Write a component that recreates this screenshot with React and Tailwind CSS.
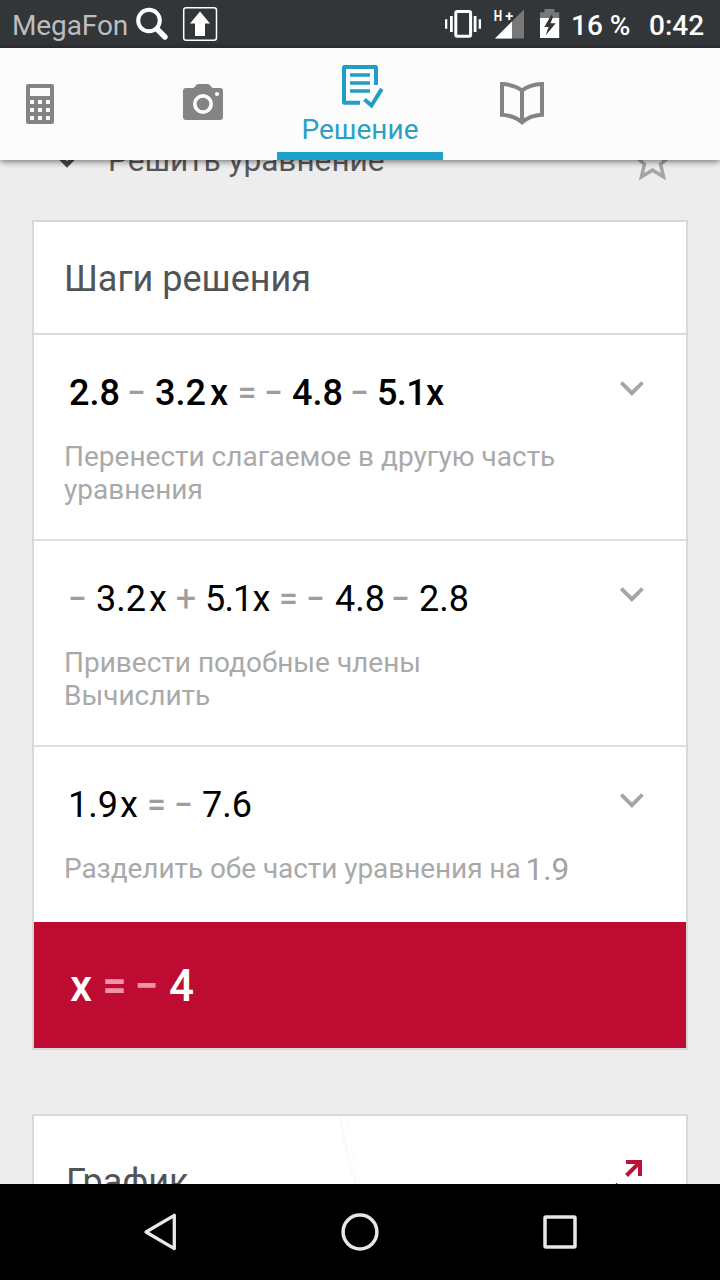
import React from "react";

const OP = "flex justify-center text-[33px] text-[#9e9e9e] font-medium";
const PLUS = "flex justify-center text-[36px] text-[#9e9e9e]";
const RESULT_OP = "flex justify-center text-[42px] text-[#ee93a8] font-bold";

const steps = [
  {
    weight: "font-medium",
    tokens: [
      ["2.8", "ml-[5px] w-[50px]"],
      ["−", "ml-[9px] w-[17px]", OP],
      ["3.2", "ml-[10px] w-[50px]"],
      ["x", "ml-[5px] w-[19px]"],
      ["=", "ml-[9px] w-[18px]", OP],
      ["−", "ml-[9px] w-[17px]", OP],
      ["4.8", "ml-[10px] w-[52px]"],
      ["−", "ml-[7px] w-[17px]", OP],
      ["5.1x", "ml-[9px] w-[68px] tracking-[-0.6px]"],
    ],
    notes: ["Перенести слагаемое в другую часть", "уравнения"],
  },
  {
    weight: "font-normal",
    tokens: [
      ["−", "ml-[5px] w-[17px]", OP],
      ["3.2", "ml-[10px] w-[50px]"],
      ["x", "ml-[3px] w-[18px]"],
      ["+", "ml-[10px] w-[18px]", PLUS],
      ["5.1x", "ml-[10px] w-[66px] tracking-[-0.8px]"],
      ["=", "ml-[9px] w-[17px]", OP],
      ["−", "ml-[10px] w-[17px]", OP],
      ["4.8", "ml-[11px] w-[50px]"],
      ["−", "ml-[7px] w-[17px]", OP],
      ["2.8", "ml-[10px] w-[50px]"],
    ],
    notes: ["Привести подобные члены", "Вычислить"],
  },
  {
    weight: "font-normal",
    tokens: [
      ["1.9", "ml-[4px] w-[50px]"],
      ["x", "ml-[2px] w-[18px]"],
      ["=", "ml-[10px] w-[17px]", OP],
      ["−", "ml-[10px] w-[17px]", OP],
      ["7.6", "ml-[10px] w-[50px]"],
    ],
    notes: ["Разделить обе части уравнения на"],
    value: "1.9",
  },
];

function Equation({ tokens, className }) {
  return (
    <div className={`flex whitespace-nowrap ${className}`}>
      {tokens.map(([text, box, style = "block"], i) => (
        <span key={i} className={`shrink-0 ${box} ${style}`}>
          {text}
        </span>
      ))}
    </div>
  );
}

function StatusBar() {
  return (
    <div className="flex h-12 shrink-0 items-center bg-[#333639] pt-[3px] text-[28px] leading-[42px] text-white">
      <span className="ml-3 w-[118px] tracking-[-0.1px] text-[#bdbdbd]">MegaFon</span>
      <svg className="-mt-[3px] ml-[4px]" width="36" height="48" viewBox="134 0 36 48" fill="none" stroke="#fff">
        <circle cx="149" cy="20.5" r="10.8" strokeWidth="4" />
        <path d="M157 29l8 8" strokeWidth="5.4" strokeLinecap="round" />
      </svg>
      <svg className="-mt-[3px] ml-[12px]" width="36" height="48" viewBox="182 0 36 48">
        <rect x="183.7" y="7.7" width="32.8" height="32.6" rx="2.5" fill="none" stroke="#fff" strokeWidth="1.5" />
        <path d="M200 11.5L210 23.5H205V36H195V23.5H190Z" fill="#fff" />
      </svg>
      <svg className="-mt-[3px] ml-[226px]" width="38" height="48" viewBox="444 0 38 48" fill="#fff">
        <rect x="455.8" y="11.5" width="14.8" height="24.8" rx="1.5" fill="none" stroke="#fff" strokeWidth="3" />
        <path d="M450 16h2.8v16H450zM445 19.3h2.3v9.4H445zM473.7 16h2.8v16h-2.8zM478.7 19.3h2.3v9.4h-2.3z" />
      </svg>
      <svg className="-mt-[3px] ml-[11px]" width="32" height="48" viewBox="493 0 32 48">
        <path d="M495 38.5L524 9.5V38.5Z" fill="#76787a" />
        <path d="M495 38.5L512 21.5V38.5Z" fill="#fff" />
        <text fill="#fff" y="20.6" fontFamily="Roboto, sans-serif" fontSize="14.5" fontWeight="700">
          <tspan x="493.700" textLength="8.400" lengthAdjust="spacingAndGlyphs">H</tspan>
          <tspan x="505.300">+</tspan>
        </text>
      </svg>
      <svg className="-mt-[3px] ml-[14px]" width="22" height="48" viewBox="539 0 22 48">
        <path d="M544.5 9h10v3.2h4.7V19H540v-6.8h4.5z" fill="#76787a" />
        <path d="M540 18h19.2v20H540z" fill="#fff" />
        <path d="M551.5 14.5L544.3 27H548.6L545.6 35.5L555.7 23.2H550.5L553 17Z" fill="#333639" />
      </svg>
      <span className="ml-[10px] w-[62px] whitespace-nowrap font-medium">16 %</span>
      <span className="ml-[16px] whitespace-nowrap font-medium">0:42</span>
    </div>
  );
}

function Tabs() {
  return (
    <div className="z-10 flex h-28 shrink-0 bg-[#fcfcfc] shadow-[0_1px_7px_rgba(0,0,0,0.6)]">
      <div className="flex w-[129px] items-center pl-[26px]">
        <svg width="28" height="40" viewBox="0 0 28 40">
          <path
            fill="#848484"
            fillRule="evenodd"
            d="M2 0h24a2 2 0 012 2v36a2 2 0 01-2 2H2a2 2 0 01-2-2V2a2 2 0 012-2zM4 4v8h20V4zM4 16v4h4v-4zM12 16v4h4v-4zM20 16v4h4v-4zM4 24v4h4v-4zM12 24v4h4v-4zM20 24v4h4v-4zM4 32v4h4v-4zM12 32v4h4v-4zM20 32v4h4v-4z"
          />
        </svg>
      </div>
      <div className="flex w-[148px] items-center justify-center">
        <svg width="40" height="36" viewBox="0 0 40 36" className="-mt-1">
          <path d="M3 4h7.5l3-3.2Q14.300 0 15.300 0h9.400q1 0 1.800.8l3 3.200H37q3 0 3 3v26q0 3-3 3H3q-3 0-3-3V7q0-3 3-3z" fill="#848484" />
          <circle cx="20" cy="20" r="8.200" fill="none" stroke="#fcfcfc" strokeWidth="3.700" />
          <circle cx="34" cy="10" r="2.100" fill="#fcfcfc" />
        </svg>
      </div>
      <div className="flex w-[166px] flex-col items-center border-b-8 border-[#1ba1cb] pt-4">
        <svg width="42" height="46" viewBox="341 64 42 46" fill="none" stroke="#249dc4" strokeWidth="4" className="ml-[4px]">
          <path d="M376 85V67.500Q376 67 375.500 67H344.500Q344 67 344 67.500V102.300Q344 102.800 344.500 102.800H360" />
          <path d="M350 75h20M350 83h20M350 91h20" strokeWidth="3.600" />
          <path d="M364.500 99.500L371.500 105.500L381.800 88.800" />
        </svg>
        <span className="pt-px text-[28px] leading-[38px] text-[#2c9fc4]">Решение</span>
      </div>
      <div className="flex w-[158px] items-center justify-center">
        <svg width="46" height="46" viewBox="499 80 46 46" fill="none" stroke="#848484" strokeWidth="4" className="-mt-[2px]">
          <path d="M522 90.500Q514 84.500 502 84.100V114.800Q514 115.500 522 122.300Q530 115.500 542 114.800V84.100Q530 84.500 522 90.500V122" />
        </svg>
      </div>
    </div>
  );
}

function NavBar() {
  return (
    <div className="z-10 flex h-24 shrink-0 items-center justify-center gap-[160px] bg-black">
      <svg width="40" height="40" viewBox="140 1212 40 40" fill="none" stroke="#e8e8e8" strokeWidth="3.300" strokeLinejoin="round">
        <path d="M146 1232L174.300 1215.300V1248.700Z" />
      </svg>
      <svg width="40" height="40" viewBox="340 1212 40 40" fill="none" stroke="#e8e8e8" strokeWidth="3.500">
        <circle cx="360" cy="1232" r="16.900" />
      </svg>
      <svg width="40" height="40" viewBox="540 1212 40 40" fill="none" stroke="#e8e8e8" strokeWidth="3.500">
        <rect x="545" y="1217" width="30" height="30" rx="1" />
      </svg>
    </div>
  );
}

export default function App() {
  return (
    <div className="flex h-[1280px] w-[720px] flex-col overflow-hidden bg-[#ededed] font-['Roboto',sans-serif]">
      <StatusBar />
      <Tabs />
      <div className="flex-1 overflow-hidden px-8">
        <div className="-mt-[60px] flex h-[120px] items-center">
          <svg width="24" height="16" viewBox="0 0 24 16" className="ml-[23px]" fill="none" stroke="#45484b" strokeWidth="4.500">
            <path d="M2 2.500L12 12.500L22 2.500" />
          </svg>
          <span className="ml-[29px] pt-px text-[31.6px] leading-[40px] whitespace-nowrap text-[#55585b]">Решить уравнение</span>
          <svg width="53" height="53" viewBox="0 0 24 24" className="mr-[9px] ml-auto" fill="#a4a5a7">
            <path d="M22 9.240l-7.190-.620L12 2 9.190 8.630 2 9.240l5.460 4.730L5.820 21 12 17.270 18.180 21l-1.630-7.030L22 9.240zM12 15.400l-3.760 2.270 1-4.280-3.320-2.880 4.380-.380L12 6.100l1.710 4.040 4.380.380-3.320 2.880 1 4.280L12 15.400z" />
          </svg>
        </div>

        <div className="border-2 border-[#d8d8d8] bg-white">
          <div className="flex h-[113px] items-center border-b-2 border-[#dadada] pt-[2px] pl-[30px] text-[36px] text-[#515457]">
            Шаги решения
          </div>
          {steps.map((step, i) => (
            <div
              key={i}
              className={`flex justify-between pt-[37px] pr-[42px] pl-[30px] ${
                i < 2 ? "h-[206px] border-b-2 border-[#e0e0e0]" : "h-[175px]"
              }`}
            >
              <div>
                <Equation tokens={step.tokens} className={`h-[42px] text-[36px] leading-[42px] text-black ${step.weight}`} />
                <div className="mt-[26px] text-[28px] leading-[33px] whitespace-nowrap text-[#a9a9a9]">
                  {step.notes.map((line) => (
                    <div key={line} className="flex">
                      <span className={step.value ? "tracking-[-0.07px]" : ""}>{line}</span>
                      {step.value && (
                        <span className="ml-[5px] pt-px text-[31.5px] text-[#a3a3a3]">{step.value}</span>
                      )}
                    </div>
                  ))}
                </div>
              </div>
              <svg width="24" height="16" viewBox="620 380 24 16" className="mt-[8px]" fill="none" stroke="#a4a5a7" strokeWidth="3.800">
                <path d="M621.300 382.500L631.900 393.200L642.500 382.500" />
              </svg>
            </div>
          ))}
          <div className="flex h-[126px] items-center bg-[#be0b32] pt-px pl-[30px]">
            <Equation
              className="text-[44px] leading-[52px] font-medium text-white"
              tokens={[
                ["x", "ml-[6px] w-[22px]"],
                ["=", "ml-[12px] w-[21px]", RESULT_OP],
                ["−", "ml-[11px] w-[21px]", RESULT_OP],
                ["4", "ml-[12px] w-[26px]"],
              ]}
            />
          </div>
        </div>

        <div className="relative mt-16 flex h-[200px] justify-between border-2 border-[#d8d8d8] bg-white pr-[43px] pl-[30px]">
          <svg width="300" height="68" viewBox="0 0 300 68" className="absolute top-0 left-[300px]" fill="none" strokeWidth="3">
            <path d="M6 0Q10 28 22 68" stroke="#fef9f9" />
            <path d="M13 0Q16 28 26 68" stroke="#fbfdfe" />
            <path d="M242 0V68" stroke="#fcfcfc" strokeWidth="1" />
          </svg>
          <span className="pt-[45px] pl-[2px] text-[36px] leading-[42px] text-[#515457]">График</span>
          <svg width="28" height="28" viewBox="615 1160 28 28" className="mt-[44px]" fill="none" stroke="#bd1237" strokeWidth="4">
            <path d="M626 1162H640V1176M640 1162L626.500 1175.500" />
            <path d="M616.600 1183V1188" strokeWidth="1.500" />
          </svg>
        </div>
      </div>
      <NavBar />
    </div>
  );
}
